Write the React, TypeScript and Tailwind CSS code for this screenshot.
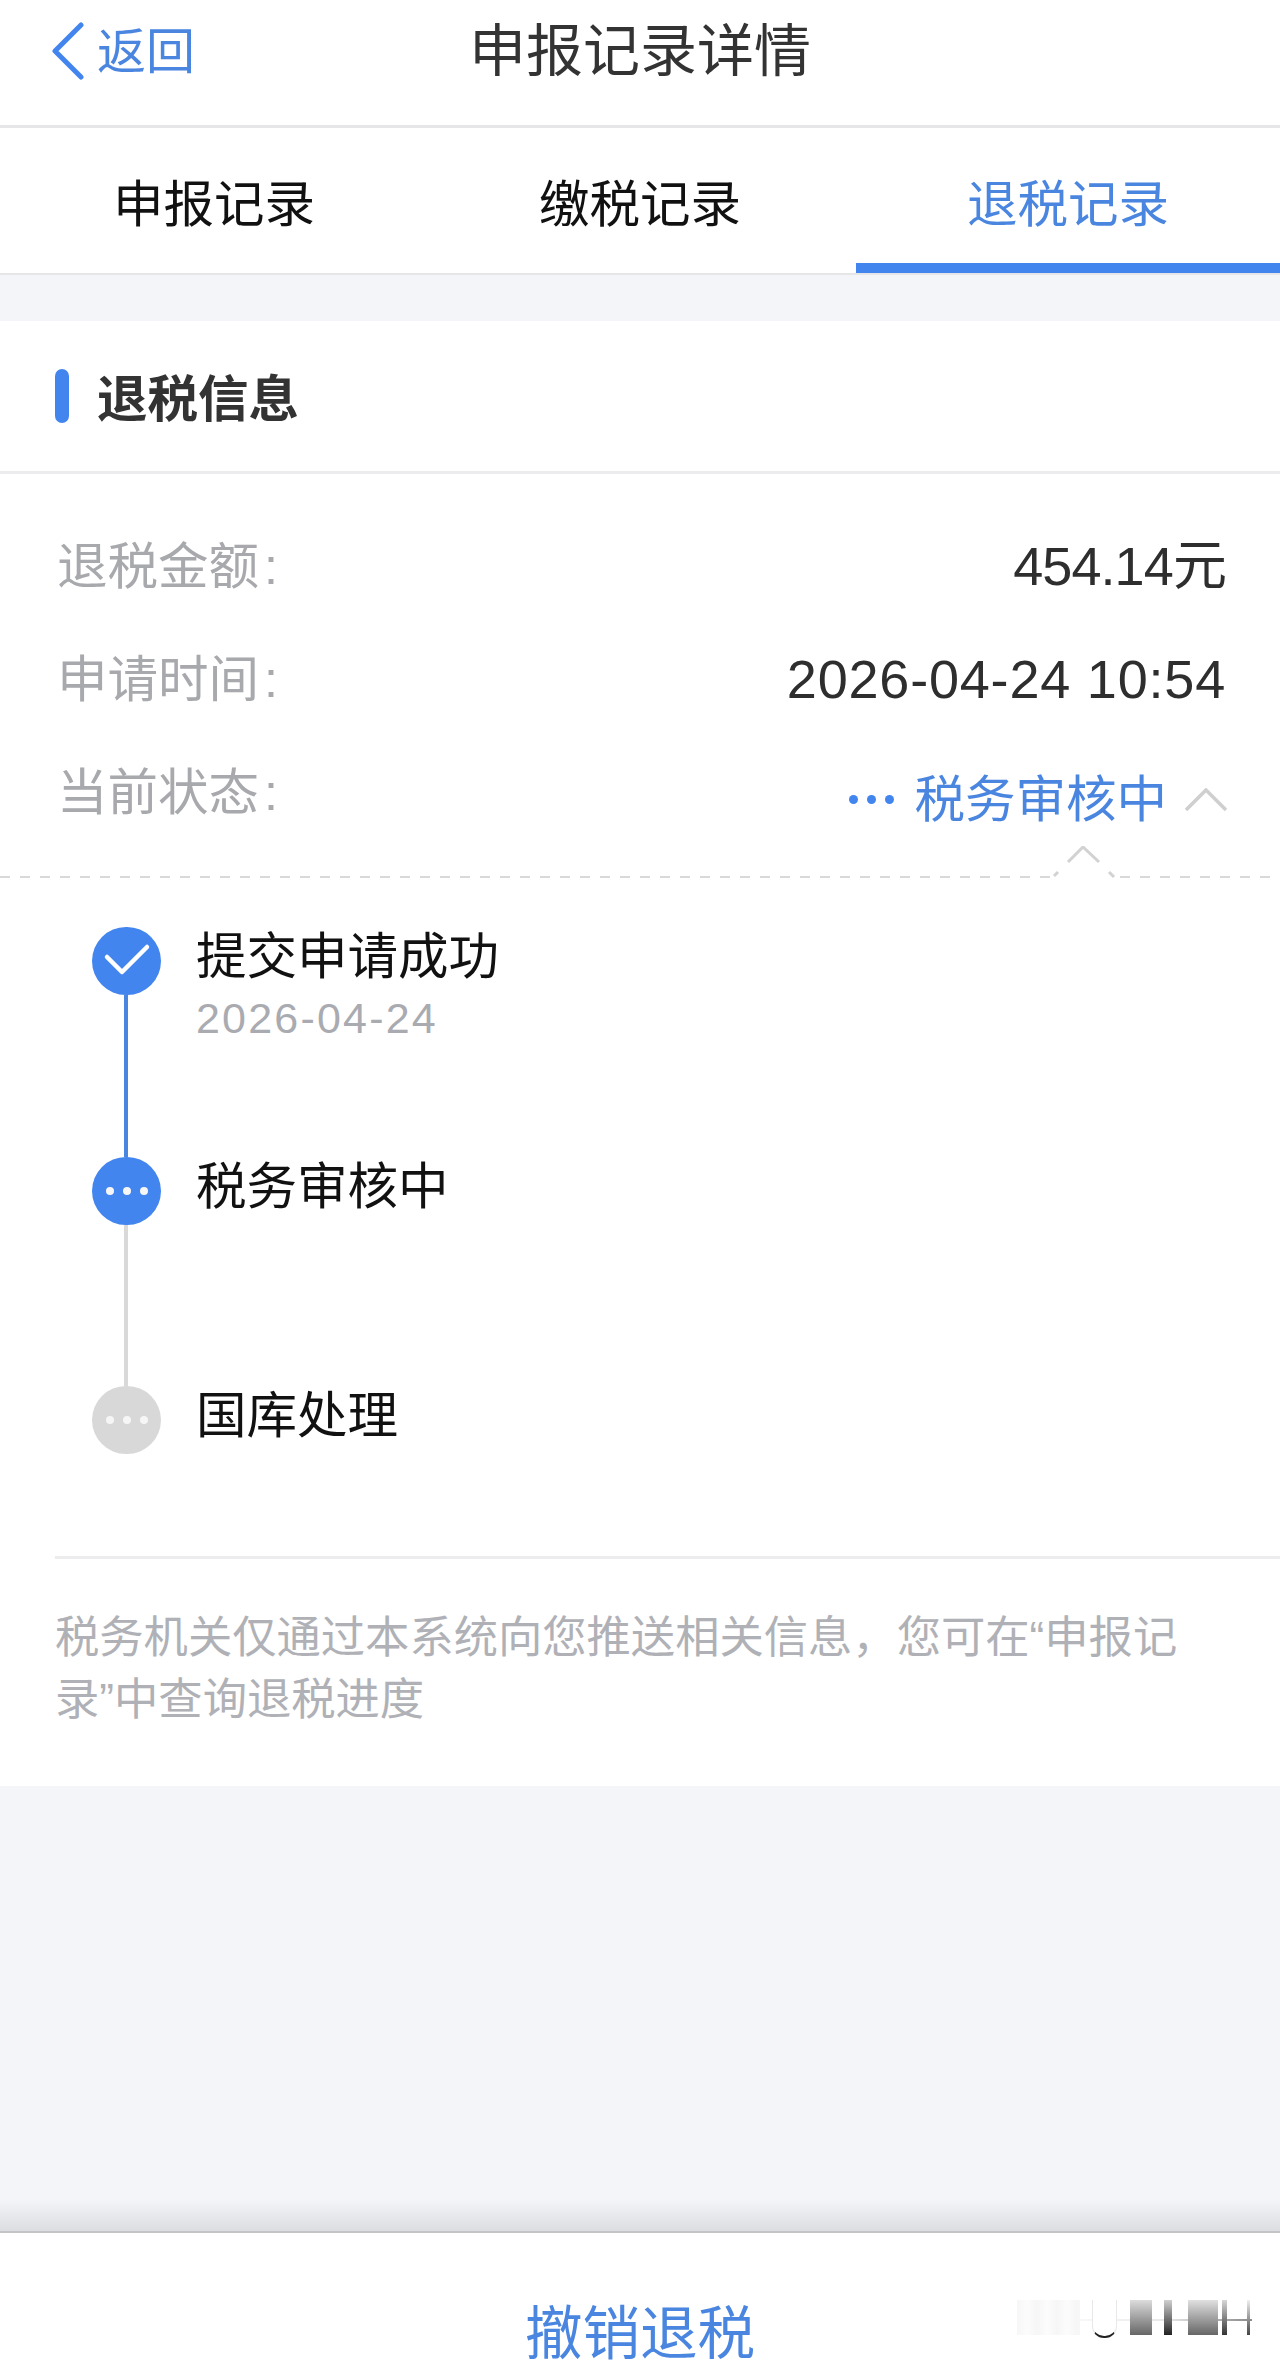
const blue = "#4285ee";

const rows = [
  { label: "退税金额", value: "454.14元", tracking: "tracking-[-0.9px]" },
  { label: "申请时间", value: "2026-04-24 10:54", tracking: "tracking-[0.8px]" },
];

const steps = [
  { title: "提交申请成功", date: "2026-04-24", kind: "done", line: "bg-[#4a86e0]" },
  { title: "税务审核中", kind: "active", line: "bg-[#d9d9d9]" },
  { title: "国库处理", kind: "pending" },
];

function Dots({ className }: { className: string }) {
  return (
    <div className="flex gap-[9px]">
      <span className={`h-[8px] w-[8px] rounded-full ${className}`} />
      <span className={`h-[8px] w-[8px] rounded-full ${className}`} />
      <span className={`h-[8px] w-[8px] rounded-full ${className}`} />
    </div>
  );
}

function Label({ text }: { text: string }) {
  return (
    <span className="text-[50.5px] text-[#a8a9ad]">
      {text}
      <span className="ml-[5px]">:</span>
    </span>
  );
}

function StepIcon({ kind }: { kind: string }) {
  if (kind === "done") {
    return (
      <div className="h-[68px] w-[69px] shrink-0 rounded-full bg-[#4285ee]">
        <svg width="69" height="68" viewBox="0 0 69 68" fill="none">
          <path d="M15 30 L30 45 L55 20" stroke="#fff" strokeWidth="4.5" strokeLinecap="round" strokeLinejoin="round" />
        </svg>
      </div>
    );
  }
  return (
    <div className={`flex h-[68px] w-[69px] shrink-0 items-center justify-center rounded-full ${kind === "active" ? "bg-[#4285ee]" : "bg-[#d8d8d8]"}`}>
      <Dots className="bg-[#f6f6f6]" />
    </div>
  );
}

function Smudge() {
  // leftover patch at the bottom right of the photo
  return (
    <div className="absolute left-[1017px] top-[2300px] h-[40px] w-[235px]">
      <div className="absolute left-0 top-0 h-[35px] w-[63px] bg-[repeating-linear-gradient(90deg,#f6f6f6_0px,#fcfcfc_10px,#f6f6f6_20px)]" />
      <div className="absolute left-[63px] right-0 top-[19px] h-[2px] bg-[linear-gradient(90deg,#f8f8f8,#e8e8e8_50%,#8a8a8a)]" />
      <div className="absolute left-[75px] top-0 h-[38px] w-[25px] rounded-b-[12px] border-x border-b-2 border-x-[#e8e8e8] border-b-[#222] bg-white" />
      <div className="absolute left-[113px] top-0 h-[35px] w-[22px] bg-[linear-gradient(180deg,#dcdcdc,#666)]" />
      <div className="absolute left-[147px] top-0 h-[35px] w-[8px] bg-[linear-gradient(180deg,#d0d0d0,#222)]" />
      <div className="absolute left-[171px] top-0 h-[35px] w-[30px] bg-[linear-gradient(180deg,#e0e0e0,#666)]" />
      <div className="absolute left-[205px] top-0 h-[35px] w-[5px] bg-[linear-gradient(180deg,#d8d8d8,#333)]" />
      <div className="absolute left-[230px] top-0 h-[35px] w-[3px] bg-[linear-gradient(180deg,#f0f0f0,#444)]" />
    </div>
  );
}

export default function App() {
  return (
    <div className="relative flex h-[2366px] w-[1280px] flex-col overflow-hidden bg-[#f4f5f9] font-['Liberation_Sans','Noto_Sans_CJK_SC',sans-serif]">
      {/* nav bar */}
      <div className="grid h-[128px] shrink-0 grid-cols-[1fr_auto_1fr] items-center border-b-[3px] border-[#e6e6e8] bg-white pb-[24px]">
        <div className="flex items-center pl-[51px] text-[49px] leading-[60px] text-[#4a86e0]">
          <svg width="34" height="58" viewBox="0 0 34 58" fill="none" className="mr-[12px]">
            <path d="M30 3 L4 29 L30 55" stroke={blue} strokeWidth="5" strokeLinecap="round" strokeLinejoin="round" />
          </svg>
          <span className="pt-[2px]">返回</span>
        </div>
        <div className="text-[57px] leading-[70px] text-[#333]">申报记录详情</div>
        <div />
      </div>

      {/* tabs */}
      <div className="grid h-[147px] shrink-0 grid-cols-[1fr_1fr_424px] border-b-[2px] border-[#e6e6e8] bg-white text-[50.5px] leading-[60px]">
        <div className="flex items-center justify-center pt-[8px] text-[#111]">申报记录</div>
        <div className="flex items-center justify-center pr-[4px] pt-[8px] text-[#111]">缴税记录</div>
        <div className="flex items-center justify-center border-b-[10px] border-[#4285ee] pt-[18px] text-[#4a86e0]">退税记录</div>
      </div>

      <div className="h-[46px] shrink-0" />

      {/* refund card */}
      <div className="h-[1465px] shrink-0 bg-white">
        <div className="flex h-[153px] items-center border-b-[3px] border-[#ececee] pl-[55px]">
          <div className="h-[54px] w-[14px] rounded-full bg-[#4285ee]" />
          <div className="ml-[28px] pt-[7px] text-[50.5px] font-bold leading-[60px] text-[#333]">退税信息</div>
        </div>

        <div className="pt-[36px]">
          {rows.map((row) => (
            <div key={row.label} className="flex h-[113px] items-center justify-between pl-[57px] pr-[54px]">
              <Label text={row.label} />
              <span className={`text-[54px] text-[#2e2e2e] ${row.tracking}`}>{row.value}</span>
            </div>
          ))}
          <div className="flex h-[113px] items-center justify-between pl-[57px] pr-[52px]">
            <Label text="当前状态" />
            <div className="flex items-center pt-[14px]">
              <Dots className="h-[9px] w-[9px] bg-[#4285ee]" />
              <span className="ml-[21px] text-[50.5px] leading-[60px] text-[#4a86e0]">税务审核中</span>
              <svg width="44" height="24" viewBox="0 0 44 24" fill="none" className="ml-[17px]">
                <path d="M2 22 L22 2 L42 22" stroke="#cfcfcf" strokeWidth="3.5" />
              </svg>
            </div>
          </div>
        </div>

        {/* dashed divider with notch */}
        <div className="relative mt-[27px] h-[2px] bg-[repeating-linear-gradient(90deg,#d9d9d9_0px,#d9d9d9_10px,transparent_10px,transparent_20px)]">
          <svg width="68" height="36" viewBox="0 0 68 36" fill="none" className="absolute left-[1049px] top-[-30px]">
            <rect x="6" y="28" width="56" height="8" fill="#fff" />
            <path d="M19 16 L34 1 L50 16" stroke="#d2d2d2" strokeWidth="3" />
            <path d="M5 30 L9 26" stroke="#d2d2d2" strokeWidth="3" />
            <path d="M60 26 L65 31" stroke="#d2d2d2" strokeWidth="3" />
          </svg>
        </div>

        {/* timeline */}
        <div className="pl-[92px] pt-[49px]">
          {steps.map((step) => (
            <div key={step.title} className="flex h-[229.5px] gap-[35px] last:h-[68px]">
              <div className="flex w-[69px] flex-col items-center">
                <StepIcon kind={step.kind} />
                {step.line && <div className={`w-[4px] flex-1 -translate-x-[1px] ${step.line}`} />}
              </div>
              <div>
                <div className="text-[50.5px] leading-[60px] text-[#111]">{step.title}</div>
                {step.date && <div className="mt-[6px] text-[43px] leading-[50px] tracking-[2.2px] text-[#a9abb1]">{step.date}</div>}
              </div>
            </div>
          ))}
        </div>

        {/* note */}
        <div className="ml-[55px] mt-[102px] border-t-[3px] border-[#ececee] pr-[70px] pt-[48px] text-[44.3px] leading-[62px] text-[#b0b1b6]">
          税务机关仅通过本系统向您推送相关信息，您可在“申报记录”中查询退税进度
        </div>
      </div>

      {/* bottom bar */}
      <div className="mt-auto h-[32px] shrink-0 bg-[linear-gradient(180deg,#f4f5f9,#dcdde1)]" />
      <div className="flex h-[135px] shrink-0 items-start justify-center border-t-[2px] border-[#c4c4c6] bg-white pt-[66px] text-[57.5px] leading-[70px] text-[#4a86e0]">
        撤销退税
      </div>

      <Smudge />
    </div>
  );
}
